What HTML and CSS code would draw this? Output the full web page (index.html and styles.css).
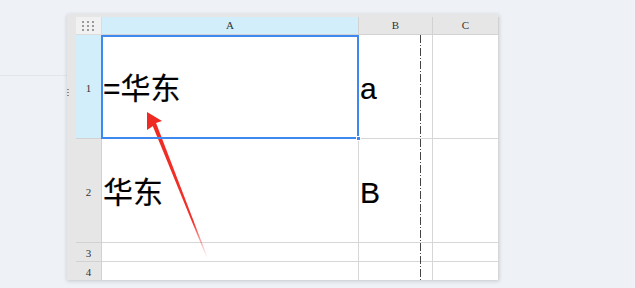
FILE: index.html
```html
<!DOCTYPE html>
<html lang="zh-CN">
<head>
    <meta charset="UTF-8">
    <title>表格</title>
    <link rel="stylesheet" href="styles.css">
</head>
<body>
    <div class="page-line"></div>
    <div class="panel">
        <div class="side-grip"><span></span><span></span><span></span></div>
        <div class="sheet">
            <div class="corner">
                <div class="corner-icon">
                    <i></i><i></i><i></i><i></i><i></i><i></i><i></i><i></i><i></i>
                </div>
            </div>
            <div class="col-head active">A</div>
            <div class="col-head">B</div>
            <div class="col-head">C</div>

            <div class="row-head active">1</div>
            <div class="cell selected">
                <span class="val">=华东</span>
                <div class="sel-box"><span class="handle"></span></div>
            </div>
            <div class="cell"><span class="val">a</span></div>
            <div class="cell"></div>

            <div class="row-head">2</div>
            <div class="cell"><span class="val">华东</span></div>
            <div class="cell"><span class="val">B</span></div>
            <div class="cell"></div>

            <div class="row-head">3</div>
            <div class="cell"></div>
            <div class="cell"></div>
            <div class="cell"></div>

            <div class="row-head">4</div>
            <div class="cell"></div>
            <div class="cell"></div>
            <div class="cell"></div>

            <div class="page-break"></div>
        </div>
    </div>

    <!-- annotation arrow -->
    <svg class="arrow" width="635" height="288" viewBox="0 0 635 288">
        <defs>
            <linearGradient id="fade" x1="148" y1="113" x2="207" y2="258" gradientUnits="userSpaceOnUse">
                <stop offset="0" stop-color="#ee2a22"/>
                <stop offset="0.75" stop-color="#f2302a"/>
                <stop offset="1" stop-color="#f2302a" stop-opacity="0"/>
            </linearGradient>
        </defs>
        <polygon points="151.5,123 155.5,121.5 207.8,258 206.8,258" fill="url(#fade)"/>
        <polygon points="147,112 162,121 156,123 153,126 147,130" fill="#ee2a22"/>
    </svg>
</body>
</html>
```

FILE: styles.css
```css
* {
    margin: 0;
    padding: 0;
    box-sizing: border-box;
}

body {
    width: 635px;
    height: 288px;
    background: #eef1f6;
    font-family: 'Liberation Sans', 'Noto Sans CJK SC', sans-serif;
    position: relative;
    overflow: hidden;
}

.page-line {
    position: absolute;
    left: 0;
    top: 75px;
    width: 67px;
    height: 1px;
    background: #e2e5ea;
}

.panel {
    position: absolute;
    left: 67px;
    top: 14px;
    width: 432px;
    height: 266px;
    background: #e6e6e6;
    padding: 3px 0 0 9px;
    overflow: hidden;
    box-shadow: 0 1px 4px rgba(0, 0, 0, 0.18);
}

.side-grip {
    position: absolute;
    left: 0;
    top: 75px;
    display: flex;
    flex-direction: column;
    gap: 2px;
}

.side-grip span {
    width: 2px;
    height: 1px;
    background: #8a8a8a;
}

.sheet {
    position: relative;
    display: grid;
    grid-template-columns: 26px 257px 74px 66px;
    grid-template-rows: 18px 104px 104px 19px 19px;
    background: #fff;
}

.corner {
    background: #f1f1f1;
    border-right: 1px solid #dcdcdc;
    border-bottom: 1px solid #dcdcdc;
    display: flex;
    align-items: center;
    justify-content: center;
}

.corner-icon {
    display: grid;
    grid-template-columns: repeat(3, 2px);
    grid-template-rows: repeat(3, 2px);
    gap: 2px 3px;
    margin-left: -1px;
}

.corner-icon i {
    background: #9a9a9a;
}

.col-head {
    background: #e6e6e6;
    border-right: 1px solid #d2d2d2;
    border-bottom: 1px solid #d2d2d2;
    font-family: 'Liberation Serif', serif;
    font-size: 11px;
    color: #333;
    text-align: center;
    line-height: 17px;
}

.col-head.active {
    background: #d1eefa;
}

.row-head {
    background: #e6e6e6;
    border-right: 1px solid #d2d2d2;
    border-bottom: 1px solid #d2d2d2;
    font-family: 'Liberation Serif', serif;
    font-size: 11px;
    color: #333;
    display: flex;
    align-items: center;
    justify-content: center;
    padding-top: 2px;
}

.row-head.active {
    background: #d1eefa;
}

.cell {
    position: relative;
    border-right: 1px solid #d6d6d6;
    border-bottom: 1px solid #d6d6d6;
    display: flex;
    align-items: center;
    padding-left: 1px;
}

.val {
    font-size: 30px;
    color: #000;
    line-height: 1;
    padding-top: 5px;
    -webkit-text-stroke: 0.2px #000;
}

.sel-box {
    position: absolute;
    left: -1px;
    top: 0;
    right: -1px;
    bottom: -1px;
    border: 2px solid #3f88ef;
    z-index: 2;
}

.handle {
    position: absolute;
    right: -4px;
    bottom: -4px;
    width: 5px;
    height: 5px;
    background: #3f88ef;
    border: 1px solid #fff;
}

.page-break {
    position: absolute;
    left: 344px;
    top: 18px;
    bottom: 0;
    width: 1px;
    background: repeating-linear-gradient(to bottom, #444 0, #444 8px, transparent 8px, transparent 10px, #444 10px, #444 11px, transparent 11px, transparent 13px);
}

.arrow {
    position: absolute;
    left: 0;
    top: 0;
    pointer-events: none;
}
```
